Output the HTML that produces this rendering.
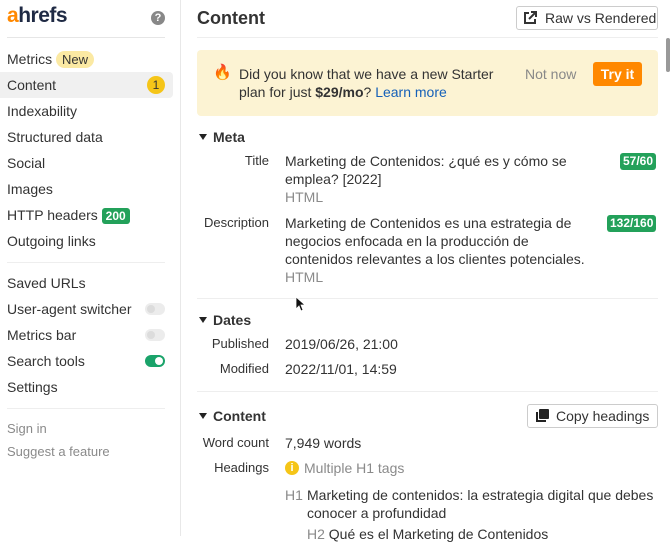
<!DOCTYPE html>
<html><head><meta charset="utf-8"><style>
*{margin:0;padding:0;box-sizing:border-box}
body{width:670px;height:536px;overflow:hidden;background:#fff;font-family:"Liberation Sans",sans-serif;color:#333;font-size:14px;position:relative}
.a{position:absolute;white-space:nowrap}
.sb{position:absolute;left:0;top:0;width:181px;height:536px;border-right:1px solid #e8e8e8}
.it{position:absolute;left:7px;font-size:14px;line-height:18px}
.hr{position:absolute;height:1px;background:#e6e6e6}
.lbl{position:absolute;right:401px;font-size:13px;line-height:18px;text-align:right;white-space:nowrap}
.val{position:absolute;left:285px;font-size:14px;line-height:18px}
.g{color:#8a8a8a}
.badge{position:absolute;background:#23a15a;color:#fff;font-weight:bold;font-size:12px;line-height:17px;padding:0 3px;border-radius:3px}
.tg{position:absolute;left:145px;width:20px;height:12px;border-radius:6px;background:#ececec}
.tg i{position:absolute;left:2px;top:2px;width:8px;height:8px;border-radius:50%;background:#dcdcdc}
.sec{position:absolute;left:213px;font-weight:bold;font-size:14px;line-height:18px}
.tri{position:absolute;left:199px;width:0;height:0;border-left:4px solid transparent;border-right:4px solid transparent;border-top:6px solid #222}
.btn{position:absolute;border:1px solid #ccc;border-radius:3px;background:#fff;font-size:14px}
</style></head><body>
<div class="sb">
 <div class="a" style="left:7px;top:4px;font-size:21px;font-weight:bold;letter-spacing:-0.5px;color:#1f2a44"><span style="color:#ff8800">a</span>hrefs</div>
 <div class="a" style="left:151px;top:11px;width:14px;height:14px;border-radius:50%;background:#888;color:#fff;font-size:11px;font-weight:bold;text-align:center;line-height:14px">?</div>
 <div class="hr" style="left:7px;top:37px;width:158px"></div>
 <div class="it" style="top:50px">Metrics <span style="background:#fbe9a3;border-radius:9px;padding:1px 6px;font-size:13px">New</span></div>
 <div style="position:absolute;left:0;top:72px;width:173px;height:26px;background:#f0f0f0;border-radius:0 4px 4px 0"></div>
 <div class="it" style="top:76px">Content</div>
 <div class="a" style="left:147px;top:76px;width:18px;height:18px;border-radius:50%;background:#f5c518;font-size:12px;text-align:center;line-height:18px">1</div>
 <div class="it" style="top:102px">Indexability</div>
 <div class="it" style="top:128px">Structured data</div>
 <div class="it" style="top:154px">Social</div>
 <div class="it" style="top:180px">Images</div>
 <div class="it" style="top:206px">HTTP headers <span style="background:#23a15a;color:#fff;font-weight:bold;font-size:12px;padding:1px 4px;border-radius:3px">200</span></div>
 <div class="it" style="top:232px">Outgoing links</div>
 <div class="hr" style="left:7px;top:262px;width:158px;background:#eee"></div>
 <div class="it" style="top:274px">Saved URLs</div>
 <div class="it" style="top:300px">User-agent switcher</div>
 <div class="tg" style="top:303px"><i></i></div>
 <div class="it" style="top:326px">Metrics bar</div>
 <div class="tg" style="top:329px"><i></i></div>
 <div class="it" style="top:352px">Search tools</div>
 <div class="tg" style="top:355px;background:#1aa36a"><i style="left:10px;background:#fff"></i></div>
 <div class="it" style="top:378px">Settings</div>
 <div class="hr" style="left:7px;top:408px;width:158px;background:#eee"></div>
 <div class="it g" style="top:420px;font-size:13px">Sign in</div>
 <div class="it g" style="top:443px;font-size:13px">Suggest a feature</div>
</div>

<div class="a" style="left:197px;top:8px;font-size:18px;font-weight:bold;line-height:20px">Content</div>
<div class="btn" style="left:516px;top:6px;width:142px;height:24px;line-height:22px;padding-left:28px">Raw vs Rendered</div>
<svg class="a" style="left:523px;top:11px" width="14" height="14" viewBox="0 0 14 14"><path d="M6 2H2v10h10V8" fill="none" stroke="#333" stroke-width="2"/><path d="M8 1h5v5M13 1L6 8" fill="none" stroke="#333" stroke-width="2"/></svg>
<div class="hr" style="left:197px;top:37px;width:461px;background:#eee"></div>
<div class="a" style="left:666px;top:38px;width:4px;height:34px;background:#999;border-radius:2px"></div>

<div class="a" style="left:197px;top:50px;width:461px;height:66px;background:#fcf3d3;border-radius:4px"></div>
<div class="a" style="left:213px;top:63px;font-size:15px">🔥</div>
<div class="a" style="left:239px;top:65px;line-height:18px">Did you know that we have a new Starter<br>plan for just <b>$29/mo</b>? <span style="color:#1560b8">Learn more</span></div>
<div class="a" style="left:525px;top:66px;color:#888">Not now</div>
<div class="a" style="left:593px;top:62px;width:49px;height:24px;background:#ff8800;color:#fff;font-weight:bold;border-radius:3px;text-align:center;line-height:24px">Try it</div>

<div class="tri" style="top:134px"></div><div class="sec" style="top:128px">Meta</div>
<div class="lbl" style="top:152px">Title</div>
<div class="val" style="top:152px">Marketing de Contenidos: ¿qué es y cómo se<br>emplea? [2022]<br><span class="g">HTML</span></div>
<div class="badge" style="left:620px;top:153px">57/60</div>
<div class="lbl" style="top:214px">Description</div>
<div class="val" style="top:214px">Marketing de Contenidos es una estrategia de<br>negocios enfocada en la producción de<br>contenidos relevantes a los clientes potenciales.<br><span class="g">HTML</span></div>
<div class="badge" style="left:607px;top:215px">132/160</div>
<div class="hr" style="left:197px;top:298px;width:461px;background:#eee"></div>
<svg class="a" style="left:295px;top:296px" width="10" height="16" viewBox="0 0 10 16"><path d="M1 1v12l3-3 2 5 2-1-2-5h4z" fill="#111" stroke="#fff" stroke-width=".8"/></svg>

<div class="tri" style="top:317px"></div><div class="sec" style="top:311px">Dates</div>
<div class="lbl" style="top:335px">Published</div><div class="val" style="top:335px">2019/06/26, 21:00</div>
<div class="lbl" style="top:360px">Modified</div><div class="val" style="top:360px">2022/11/01, 14:59</div>
<div class="hr" style="left:197px;top:391px;width:461px;background:#eee"></div>

<div class="tri" style="top:413px"></div><div class="sec" style="top:407px">Content</div>
<div class="btn" style="left:527px;top:404px;width:131px;height:24px;line-height:22px;padding-left:28px">Copy headings</div>
<svg class="a" style="left:536px;top:409px" width="13" height="13" viewBox="0 0 13 13"><rect x="3" y="0" width="10" height="10" rx="1" fill="#222"/><path d="M1 3v9h9" fill="none" stroke="#222" stroke-width="2"/></svg>
<div class="lbl" style="top:434px">Word count</div><div class="val" style="top:434px">7,949 words</div>
<div class="lbl" style="top:459px">Headings</div>
<div class="a" style="left:285px;top:461px;width:14px;height:14px;border-radius:50%;background:#f5c518;color:#fff;font-size:11px;font-weight:bold;text-align:center;line-height:14px">i</div>
<div class="a g" style="left:304px;top:459px;line-height:18px">Multiple H1 tags</div>
<div class="a g" style="left:285px;top:486px;line-height:18px">H1</div>
<div class="a" style="left:307px;top:486px;line-height:18px">Marketing de contenidos: la estrategia digital que debes<br>conocer a profundidad</div>
<div class="a" style="left:307px;top:525px;line-height:18px"><span class="g">H2</span> Qué es el Marketing de Contenidos</div>
</body></html>
